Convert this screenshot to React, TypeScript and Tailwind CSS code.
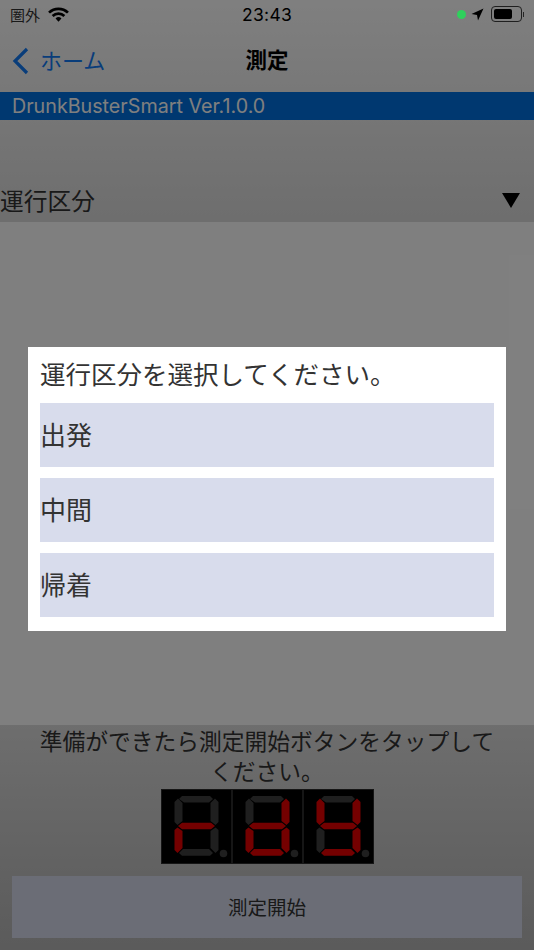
const JP = 'font-["Noto_Sans_CJK_JP","Noto_Sans",sans-serif]';

const OPTIONS = ['出発', '中間', '帰着'];

const SEGMENTS: Record<string, string> = {
  top: '21,7 49,7 52,10 48,13.5 23,13.5 18,10',
  mid: '17,37 21,33.7 50,33.7 54,37 50,40.3 21,40.3',
  bottom: '22,60 48,60 52,64 49,66.7 21,66.7 18,64',
  upperLeft: '13.5,13 17,9.5 21.5,14 21.5,32 16.5,36 13.5,33',
  lowerLeft: '13.5,41 16.5,38.5 21.5,42 21.5,59 16.5,64 13.5,61',
  upperRight: '57.5,13 54,9.5 49.5,14 49.5,32 54.5,36 57.5,33',
  lowerRight: '57.5,41 54.5,38.5 49.5,42 49.5,59 54.5,64 57.5,61',
};

function Digit({ lit }: { lit: string[] }) {
  return (
    <svg viewBox="0 0 71 75" className="w-[71px] h-[75px] shrink-0">
      <rect x="0" y="0" width="71" height="75" fill="#000" />
      <rect x="0.5" y="0.5" width="70" height="74" fill="none" stroke="#2c2c2c" />
      {Object.keys(SEGMENTS).map((name) => (
        <polygon key={name} points={SEGMENTS[name]} fill={lit.includes(name) ? '#e80000' : '#3e3e3e'} />
      ))}
      <circle cx="62.5" cy="64.5" r="3.8" fill="#3e3e3e" />
    </svg>
  );
}

function StatusBar() {
  return (
    <div className="h-[28px] px-[10px] flex items-center justify-between relative text-black">
      <div className="flex items-center gap-[8px]">
        <span className={`${JP} text-[15px] leading-none text-[#333]`}>圏外</span>
        <svg viewBox="0 0 20 14" className="w-[21px] h-[15px] mt-[1px]">
          <path d="M1 5.2 A13 13 0 0 1 19 5.2" fill="none" stroke="#000" strokeWidth="2.6" />
          <path d="M4.4 8.4 A8.2 8.2 0 0 1 15.6 8.4" fill="none" stroke="#000" strokeWidth="2.6" />
          <path d="M7.2 10.8 L10 13.9 L12.8 10.8 A4 4 0 0 0 7.2 10.8 Z" fill="#000" />
        </svg>
      </div>
      <span className="absolute left-[242px] top-[4px] font-['Inter',sans-serif] text-[17.5px] leading-[22px] tracking-[0.3px] text-black">23:43</span>
      <div className="flex items-center">
        {/* green dot stays bright, it sits above the dim layer */}
        <div className="relative z-10 w-[9px] h-[9px] rounded-full bg-[#2fd05c] mr-[5px]" />
        <svg viewBox="0 0 13 13" className="w-[13px] h-[13px] mr-[7px]">
          <path d="M0.5 6 L12.5 0.5 L7 12.5 L6 7 Z" fill="#000" />
        </svg>
        <div className="w-[31px] h-[16px] rounded-[4px] border border-[#3f3f3f] p-[2px]">
          <div className="w-[18px] h-full rounded-[2px] bg-black" />
        </div>
        <div className="w-[1px] h-[5px] ml-[1px] bg-[#4a4a4a]" />
      </div>
    </div>
  );
}

export default function App() {
  return (
    <div className={`relative w-[534px] h-[950px] overflow-hidden bg-white ${JP}`}>
      <div className="h-[222px] bg-gradient-to-b from-[#ffffff] to-[#dcdcdc] flex flex-col">
        <StatusBar />
        <div className="h-[63px] relative flex items-center justify-center">
          <div className="absolute left-[12px] top-[18px] flex items-center">
            <svg viewBox="0 0 17 28" className="w-[17px] h-[28px]">
              <path d="M15 2 L3 14 L15 26" fill="none" stroke="#127af5" strokeWidth="3.2" />
            </svg>
            <span className="ml-[11px] mb-[3px] text-[22px] leading-[26px] text-[#127af5]">ホーム</span>
          </div>
          <span className="text-[21.5px] font-bold text-black leading-[26px] mb-[2px]">測定</span>
        </div>
        <div className="mt-[1px] h-[28px] bg-[#0070e0] flex items-center pl-[12px]">
          <span className="font-['Inter',sans-serif] text-[19.7px] leading-none text-white mt-[2px]">DrunkBusterSmart Ver.1.0.0</span>
        </div>
        <div className="flex-1 flex items-end justify-between">
          <span className="text-[23.75px] leading-[42px] text-[#333] mb-[1px]">運行区分</span>
          <span className="w-0 h-0 mb-[14px] mr-[14px] border-l-[9px] border-r-[9px] border-t-[15px] border-l-transparent border-r-transparent border-t-black" />
        </div>
      </div>

      <div className="h-[503px] bg-white" />

      <div className="h-[225px] bg-gradient-to-b from-[#dcdcdc] to-[#b6b6b6] flex flex-col items-center">
        <p className="w-[470px] text-center text-[22.75px] leading-[30px] mt-[1px] text-[#333]">準備ができたら測定開始ボタンをタップしてください。</p>
        <div className="flex mt-[3px]">
          <Digit lit={['mid', 'lowerLeft']} />
          <Digit lit={['upperRight', 'mid', 'lowerLeft', 'lowerRight', 'bottom']} />
          <Digit lit={['upperLeft', 'upperRight', 'mid', 'lowerRight', 'bottom']} />
        </div>
        <div className="mt-[12px] w-[510px] h-[62px] bg-[#d6dbec] flex items-center justify-center text-[19.5px] text-[#333]">測定開始</div>
      </div>

      {/* overlay + dialog */}
      <div className="absolute inset-0 bg-black/50 flex justify-center items-start pt-[347px]">
        <div className="w-[478px] bg-white px-[12px] pb-[14px]">
          <p className="h-[56px] pb-[4px] flex items-center text-[25.5px] leading-none text-[#333]">運行区分を選択してください。</p>
          <div className="flex flex-col gap-[11px]">
            {OPTIONS.map((o) => (
              <div key={o} className="h-[64px] pb-[4px] bg-[#d8dcec] flex items-center text-[26px] text-[#333]">{o}</div>
            ))}
          </div>
        </div>
      </div>
    </div>
  );
}
